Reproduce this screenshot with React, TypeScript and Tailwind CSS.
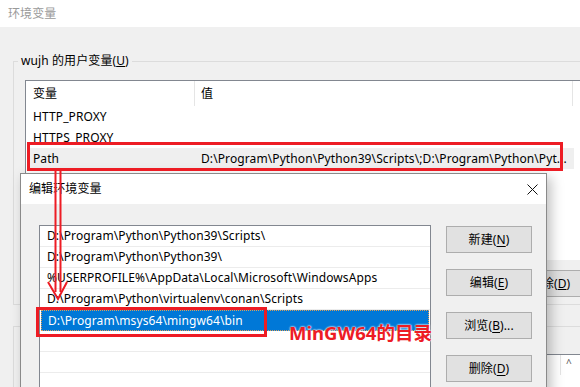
import React from 'react';

const paths = [
  'D:\\Program\\Python\\Python39\\Scripts\\',
  'D:\\Program\\Python\\Python39\\',
  '%USERPROFILE%\\AppData\\Local\\Microsoft\\WindowsApps',
  'D:\\Program\\Python\\virtualenv\\conan\\Scripts',
  'D:\\Program\\msys64\\mingw64\\bin',
  '',
  '',
];

const userVars = [
  { name: 'HTTP_PROXY', value: '' },
  { name: 'HTTPS_PROXY', value: '' },
  { name: 'Path', value: 'D:\\Program\\Python\\Python39\\Scripts\\;D:\\Program\\Python\\Pyt...' },
];

function WinButton({ label, hotkey, suffix = '' }: { label: string; hotkey: string; suffix?: string }) {
  return (
    <div className="w-[86px] h-[27px] flex items-center justify-center bg-[#e1e1e1] border border-[#adadad] text-[12px] text-black">
      {label}(<u className="underline-offset-2">{hotkey}</u>){suffix}
    </div>
  );
}

export default function App() {
  return (
    <div className="relative w-[580px] h-[387px] overflow-hidden bg-[#f0f0f0] font-['Noto_Sans','Noto_Sans_CJK_SC',sans-serif] leading-none tracking-[0.1px]">
      {/* 背景窗口：环境变量 */}
      <div className="h-[27px] bg-white flex items-center pl-[8px] text-[12px] text-[#9a9a9a]">环境变量</div>
      <div className="pl-[13px]">
        <fieldset className="mt-[26px] w-[640px] h-[252px] border border-[#dcdcdc]">
          <legend className="ml-[4px] px-[3px] text-[12px] leading-[16px] text-black">
            wujh 的用户变量(<u>U</u>)
          </legend>
          <div className="ml-[11px] mt-[11px] w-[620px] h-[180px] bg-white border-t border-l border-[#828790] text-[12px] text-black">
            <div className="flex h-[25px] items-center">
              <div className="w-[169px] h-full flex items-center pl-[7px] border-r border-[#e5e5e5]">变量</div>
              <div className="w-[378px] h-full flex items-center pl-[6px] border-r border-[#e5e5e5]">值</div>
            </div>
            {userVars.map((v) => (
              <div
                key={v.name}
                className={`flex h-[21px] items-center w-[547px] ml-[1px] ${v.name === 'Path' ? 'bg-[#efefef]' : ''}`}
              >
                <div className="w-[168px] pl-[6px]">{v.name}</div>
                <div className="pl-[6px] whitespace-nowrap">{v.value}</div>
              </div>
            ))}
          </div>
          <div className="mt-[10px] ml-[493px] w-[86px] h-[27px] flex items-center justify-center bg-[#e1e1e1] border border-[#adadad] text-[12px]">
            删除(<u>D</u>)
          </div>
        </fieldset>
        {/* 系统变量分组（被对话框遮住） */}
        <div className="mt-[21px] w-[640px] h-[80px] border-t border-l border-[#dcdcdc]">
          <div className="ml-[11px] mt-[27px] w-[620px] h-[60px] bg-white border-t border-l border-[#828790] flex">
            <div className="ml-[534px] w-[1px] h-[20px] bg-[#e5e5e5]" />
            <div className="ml-[5px] text-[10px] text-[#555] pt-[3px]">^</div>
          </div>
        </div>
      </div>

      {/* 前景对话框：编辑环境变量 */}
      <div className="absolute left-[20px] top-[173px] w-[527px] h-[240px] bg-[#f0f0f0] border border-[#8a8a8a] shadow-[4px_4px_12px_rgba(0,0,0,0.25)]">
        <div className="h-[30px] bg-white flex items-center justify-between pl-[8px] pr-[8px] text-[12px] text-black">
          <span>编辑环境变量</span>
          <svg width="11" height="11" viewBox="0 0 11 11">
            <path d="M0.5 0.5 L10.5 10.5 M10.5 0.5 L0.5 10.5" stroke="#111" strokeWidth="1" fill="none" />
          </svg>
        </div>
        <div className="flex pl-[18px] pt-[21px]">
          <div className="w-[392px] h-[200px] bg-white border border-[#828790] text-[12px] text-black">
            {paths.map((p, i) =>
              i === 4 ? (
                <div key={i} className="h-[21px] ml-[1px] mr-[1px] bg-[#0078d7] text-white flex items-center pl-[6px] border border-dotted border-[#d9a05a]">
                  {p}
                </div>
              ) : (
                <div key={i} className="h-[21px] border-b border-[#ececec] flex items-center pl-[7px] whitespace-nowrap">
                  {p}
                </div>
              )
            )}
          </div>
          <div className="ml-[15px] mt-[1px] flex flex-col gap-[16px]">
            <WinButton label="新建" hotkey="N" />
            <WinButton label="编辑" hotkey="E" />
            <WinButton label="浏览" hotkey="B" suffix="..." />
            <WinButton label="删除" hotkey="D" />
          </div>
        </div>
      </div>

      {/* 红色标注 */}
      <svg className="absolute inset-0 pointer-events-none" width="580" height="387" viewBox="0 0 580 387">
        <rect x="28.5" y="143.5" width="533" height="26" fill="none" stroke="#ed1c24" strokeWidth="3" />
        <rect x="37.5" y="308.5" width="228" height="27" fill="none" stroke="#ed1c24" strokeWidth="3" />
        <line x1="55.5" y1="171" x2="55.5" y2="292" stroke="#ed1c24" strokeWidth="2" />
        <line x1="60.5" y1="171" x2="60.5" y2="292" stroke="#ed1c24" strokeWidth="2" />
        <polyline points="48,282 58,299 67,282" fill="none" stroke="#ed1c24" strokeWidth="2" />
      </svg>
      <div className="absolute left-[289px] top-[322px] text-[18.5px] font-bold text-[#ed1c24] leading-[22px] tracking-normal [text-shadow:0_0_2px_#fff,0_0_2px_#fff]">
        MinGW64的目录
      </div>
    </div>
  );
}
